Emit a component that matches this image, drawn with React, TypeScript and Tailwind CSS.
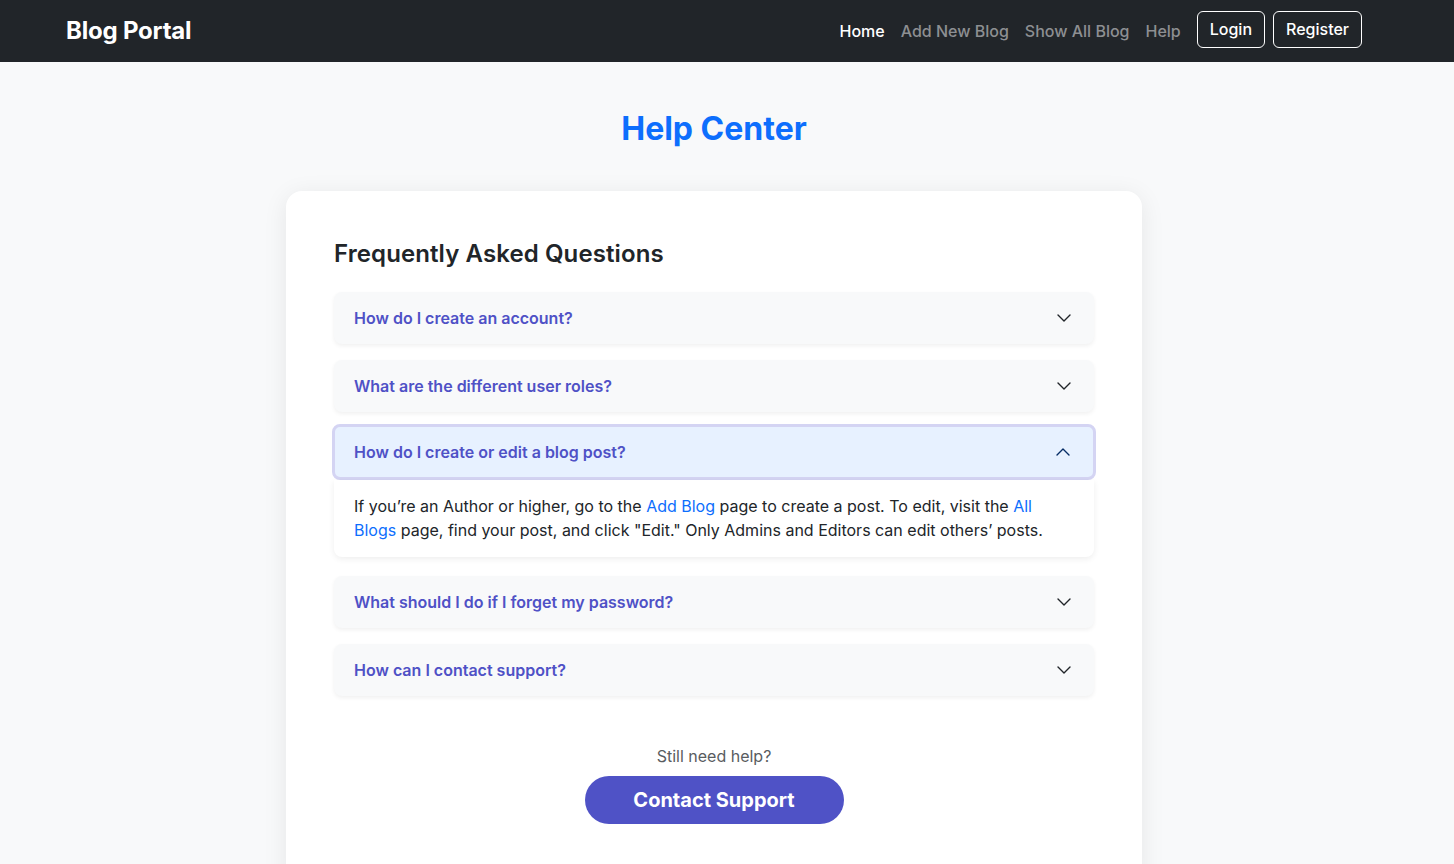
// help center page with faq accordion

import { useState } from "react";

const faqs = [
  { q: "How do I create an account?", a: "Click Register in the top right corner and fill in your details." },
  { q: "What are the different user roles?", a: "Readers, Authors, Editors and Admins." },
  { q: "How do I create or edit a blog post?", a: "" },
  { q: "What should I do if I forget my password?", a: "Contact support to reset it." },
  { q: "How can I contact support?", a: "Use the Contact Support button below." },
];

function Chevron({ up }: { up?: boolean }) {
  return (
    <svg width="16" height="16" viewBox="0 0 16 16" fill="none"
      stroke={up ? "#052c65" : "#212529"} strokeWidth="1.4" strokeLinecap="round" strokeLinejoin="round">
      {up ? <path d="M2 11L8 5L14 11" /> : <path d="M2 5L8 11L14 5" />}
    </svg>
  );
}

export default function App() {
  const [open, setOpen] = useState<number | null>(2);

  return (
    <div className="min-h-screen bg-[#f8f9fa] text-[#212529]" style={{ fontFamily: "Inter, 'Noto Sans', sans-serif" }}>

      <nav className="h-[62px] bg-[#212529] flex items-center pl-[66px] pr-[92px]">
        <a className="text-white text-[24px] font-bold tracking-[-0.2px]">Blog Portal</a>
        <div className="ml-auto flex items-center">
          <a className="px-2 text-white font-medium">Home</a>
          <a className="px-2 text-[#8d8f92] font-medium">Add New Blog</a>
          <a className="px-2 text-[#8d8f92] font-medium">Show All Blog</a>
          <a className="px-2 text-[#8d8f92] font-medium">Help</a>
          <button className="ml-2 mb-1 h-[37px] px-3 border border-white rounded-md text-white font-medium">Login</button>
          <button className="ml-2 mb-1 h-[37px] px-3 border border-white rounded-md text-white font-medium">Register</button>
        </div>
      </nav>

      <main className="flex flex-col items-center pt-[48px] pr-[26px]">
        <h1 className="text-[32px] leading-[38px] font-bold text-[#0d6efd]">Help Center</h1>

        <section className="mt-[43px] w-[856px] bg-white rounded-2xl shadow-[0_4px_24px_rgba(0,0,0,0.08)] px-12 pt-12 pb-16">
          <h2 className="text-[24px] leading-[29px] font-semibold tracking-[0.1px] mb-[24px]">Frequently Asked Questions</h2>

          <div className="flex flex-col">
            {faqs.map((f, i) => {
              const isOpen = open === i;
              const prevOpen = open === i - 1;
              return (
                <div key={i} className={i === 0 ? "" : isOpen ? "mt-3" : prevOpen ? "mt-[19px]" : "mt-4"}>
                  {isOpen ? (
                    <>
                      <button onClick={() => setOpen(null)}
                        className="-mx-[2px] w-[calc(100%+4px)] h-[56px] flex items-center pl-[19px] pr-[22px] bg-[#e7f1ff] border-[3px] border-[#d4d4f3] rounded-lg text-left">
                        <span className="flex-1 font-semibold text-[#4f51c6]">{f.q}</span>
                        <Chevron up />
                      </button>
                      <div className="bg-white rounded-b-lg shadow-[0_2px_6px_rgba(0,0,0,0.07)] px-5 pt-[14px] pb-[15px] leading-6">
                        If you’re an Author or higher, go to the <a className="text-[#0d6efd]">Add Blog</a> page to create a post. To edit, visit the <a className="text-[#0d6efd]">All Blogs</a> page, find your post, and click "Edit." Only Admins and Editors can edit others’ posts.
                      </div>
                    </>
                  ) : (
                    <button onClick={() => setOpen(i)}
                      className="w-full h-[52px] flex items-center pl-5 pr-[22px] bg-[#f8f9fa] rounded-lg shadow-[0_2px_4px_rgba(0,0,0,0.06)] text-left">
                      <span className="flex-1 font-semibold text-[#4f51c6]">{f.q}</span>
                      <Chevron />
                    </button>
                  )}
                </div>
              );
            })}
          </div>

          <div className="mt-12 flex flex-col items-center">
            <p className="text-[#595c5f] leading-6">Still need help?</p>
            <button className="mt-2 w-[259px] h-12 rounded-full bg-[#4f52c6] text-white text-[20px] font-bold">Contact Support</button>
          </div>
        </section>
      </main>
    </div>
  );
}
